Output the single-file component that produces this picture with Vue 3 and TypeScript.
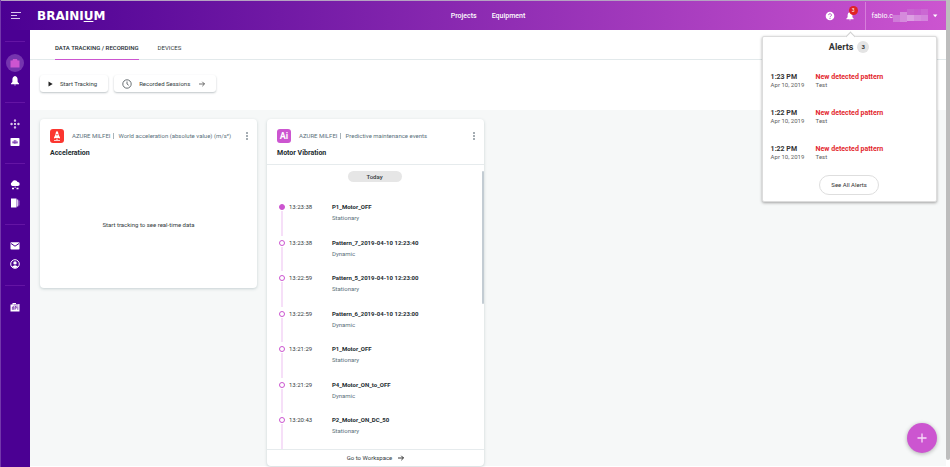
<script setup lang="ts">
interface MotorEvent {
  time: string
  name: string
  kind: string
}
interface Alert {
  time: string
  date: string
  title: string
  source: string
}

const events: MotorEvent[] = [
  { time: '13:23:38', name: 'P1_Motor_OFF', kind: 'Stationary' },
  { time: '13:23:38', name: 'Pattern_7_2019-04-10 12:23:40', kind: 'Dynamic' },
  { time: '13:22:59', name: 'Pattern_5_2019-04-10 12:23:00', kind: 'Stationary' },
  { time: '13:22:59', name: 'Pattern_6_2019-04-10 12:23:00', kind: 'Dynamic' },
  { time: '13:21:29', name: 'P1_Motor_OFF', kind: 'Stationary' },
  { time: '13:21:29', name: 'P4_Motor_ON_to_OFF', kind: 'Dynamic' },
  { time: '13:20:43', name: 'P2_Motor_ON_DC_50', kind: 'Stationary' },
]

const alerts: Alert[] = [
  { time: '1:23 PM', date: 'Apr 10, 2019', title: 'New detected pattern', source: 'Test' },
  { time: '1:22 PM', date: 'Apr 10, 2019', title: 'New detected pattern', source: 'Test' },
  { time: '1:22 PM', date: 'Apr 10, 2019', title: 'New detected pattern', source: 'Test' },
]
</script>

<template>
  <div class="window">
    <div class="app">
      <header class="topbar">
        <button class="menu" aria-label="Menu">
          <svg width="12" height="9" viewBox="0 0 12 9"><path d="M1 1.5h10M1 4.5h6M1 7.5h9" stroke="#d9c4ee" stroke-width="1.2" /></svg>
        </button>
        <a class="logo" href="#">BRAINI<span class="logo-u">U</span>M</a>
        <nav class="main-nav">
          <a href="#">Projects</a>
          <a href="#">Equipment</a>
        </nav>
        <div class="right">
          <div class="tools">
            <button class="tool" aria-label="Help">
              <svg width="10" height="10" viewBox="0 0 10 10"><circle cx="5" cy="5" r="4.3" fill="#fff" /><path d="M3.6 4.1a1.4 1.4 0 1 1 2.1 1.2Q5 5.6 5 6.1" fill="none" stroke="#b348c4" stroke-width=".9" /><circle cx="5" cy="7.3" r=".6" fill="#b348c4" /></svg>
            </button>
            <div class="alert-anchor">
              <button class="tool" aria-label="Alerts">
                <svg width="10" height="10" viewBox="0 0 10 10"><path d="M5 1q2.4.3 2.4 3v2.3l1.2 1.2v.7H1.4v-.7l1.2-1.2V4Q2.6 1.3 5 1zM4 8.700h2Q5 10 4 8.700z" fill="#fff" /></svg>
              </button>
              <span class="badge">3</span>
              <section class="popover">
                <h2>Alerts <span class="count">3</span></h2>
                <ul>
                  <li v-for="(a, i) in alerts" :key="i">
                    <div><strong>{{ a.time }}</strong><span>{{ a.date }}</span></div>
                    <div><strong class="red">{{ a.title }}</strong><span>{{ a.source }}</span></div>
                  </li>
                </ul>
                <button class="see-all">See All Alerts</button>
              </section>
            </div>
          </div>
          <button class="user">
            <span>fabio.c</span>
            <svg class="masked" width="36" height="13" viewBox="0 0 36 13" aria-hidden="true">
              <path d="M0 6h7v7H0z" fill="#cf7bd8" /><path d="M7 3h7v10H7z" fill="#d58adc" /><path d="M14 0h7v6h-7z" fill="#c765d0" /><path d="M14 6h7v6h-7z" fill="#dc9fe2" /><path d="M21 0h7v6h-7z" fill="#c75fd0" /><path d="M21 6h7v6h-7z" fill="#d68ddd" /><path d="M28 0h7v6h-7z" fill="#cb68d3" /><path d="M28 6h7v6h-7z" fill="#d484dc" />
            </svg>
            <svg width="6" height="4" viewBox="0 0 6 4"><path d="M1 .5h4.400L3.200 3.300z" fill="#fff" /></svg>
          </button>
        </div>
      </header>

      <div class="body">
        <aside class="sidebar">
          <div class="group">
            <a class="side active" href="#" aria-label="Projects">
              <svg width="12" height="12" viewBox="0 0 12 12"><path d="M1.500 3.500h2L4 2h4l.5 1.500h2v7h-9z" fill="#cc55d0" /></svg>
            </a>
            <a class="side" href="#" aria-label="Notifications">
              <svg width="12" height="12" viewBox="0 0 12 12"><path d="M6 1q2.600.5 2.600 3.500V7L10 8.600v.6H2v-.6L3.400 7V4.500Q3.400 1.500 6 1zM5 9.800h2Q6 11.300 5 9.800z" fill="#fff" /></svg>
            </a>
          </div>
          <div class="group">
            <a class="side" href="#" aria-label="Motion">
              <svg width="12" height="12" viewBox="0 0 12 12"><g fill="#fff"><circle cx="6" cy="6" r="1" /><path d="M6 1l1.400 1.800H4.600zM6 11l1.400-1.800H4.600zM1 6l1.800-1.400v2.800zM11 6L9.200 4.600v2.800z" /><path d="M5.500 3h1v1h-1zM5.500 8h1v1h-1zM3 5.500h1v1H3zM8 5.500h1v1H8z" /></g></svg>
            </a>
            <a class="side" href="#" aria-label="Models">
              <svg width="12" height="12" viewBox="0 0 12 12"><rect x="1.500" y="2" width="9" height="8" rx=".8" fill="#fff" /><path d="M4 7.500V5.300M5.300 8V4M6.800 8V4M8.100 7.500V5.300M3.500 6.200h5" stroke="#5b0ba0" stroke-width=".7" /></svg>
            </a>
          </div>
          <div class="group">
            <a class="side" href="#" aria-label="Cloud">
              <svg width="12" height="12" viewBox="0 0 12 12"><path d="M3.500 7A2 2 0 0 1 3 3.200 3 3 0 0 1 8.600 3a2 2 0 0 1 .2 4z" fill="#fff" /><path d="M3 8.700h2v1.500H3zM7.500 8.700h2v1.500h-2zM5.700 7.500h.8v1.500h-.8z" fill="#fff" /></svg>
            </a>
            <a class="side" href="#" aria-label="Devices">
              <svg width="12" height="12" viewBox="0 0 12 12"><path d="M2 1.500h5.500v9H2z" fill="#fff" /><path d="M7.500 2.500h1.700v7H7.500z" fill="#d9c4ee" /><path d="M9.200 3.500h1.300v5H9.200z" fill="#9c6bc8" /></svg>
            </a>
          </div>
          <div class="group">
            <a class="side" href="#" aria-label="Mail">
              <svg width="12" height="12" viewBox="0 0 12 12"><rect x="1.500" y="2.200" width="9" height="7.300" rx=".8" fill="#fff" /><path d="M2 3.500l4 2.700 4-2.700" fill="none" stroke="#4b0093" stroke-width="1" /></svg>
            </a>
            <a class="side" href="#" aria-label="Profile">
              <svg width="12" height="12" viewBox="0 0 12 12"><circle cx="6" cy="6" r="4.300" fill="none" stroke="#fff" /><circle cx="6" cy="4.900" r="1.700" fill="#fff" /><path d="M3 8.700Q6 5.700 9 8.700 6 11.300 3 8.700z" fill="#fff" /></svg>
            </a>
          </div>
          <div class="group">
            <a class="side" href="#" aria-label="API">
              <svg width="12" height="12" viewBox="0 0 12 12"><path d="M1.500 3.500h2V2H7v1h3.500v7.500h-9z" fill="#fff" /><path d="M3.400 8.800V6l1.200-.5v3.300M6 8.800V5.500h1.300v1.600H6M8.800 5.300v3.500M4.500 3.900h5" fill="none" stroke="#5b0ba0" stroke-width=".7" /></svg>
            </a>
          </div>
        </aside>

        <main class="main">
          <nav class="tabs">
            <a class="tab current" href="#">DATA TRACKING / RECORDING</a>
            <a class="tab" href="#">DEVICES</a>
          </nav>
          <div class="toolbar">
            <button class="action">
              <svg width="5" height="6" viewBox="0 0 5 6"><path d="M.5.500l4.200 2.500L.5 5.500z" fill="#222" /></svg>
              Start Tracking
            </button>
            <button class="action">
              <svg width="10" height="10" viewBox="0 0 10 10"><circle cx="5" cy="5" r="4.200" fill="none" stroke="#444c52" stroke-width=".8" /><path d="M5 2.500V5l1.700 1.300" fill="none" stroke="#444c52" stroke-width=".8" /></svg>
              Recorded Sessions
              <svg class="arrow" width="6" height="6" viewBox="0 0 6 6"><path d="M0 3h5.500M3.300.8L5.500 3 3.300 5.200" fill="none" stroke="#333" stroke-width=".7" /></svg>
            </button>
          </div>

          <div class="cards">
            <article class="card accel">
              <header class="card-head">
                <div class="meta">
                  <svg width="14" height="14" viewBox="0 0 14 14"><rect width="14" height="14" rx="3" fill="#fb3630" /><path d="M7 1.800q1.600 1.700 1.600 4L10 8.500v1L8.300 9H5.700L4 9.500v-1l1.400-2.700Q5.400 3.500 7 1.800z" fill="#fff" /><circle cx="7" cy="5.800" r=".8" fill="#fb3630" /><path d="M6.500 9.500h1V11h-1zM4 11.300h6v.8H4z" fill="#fff" /></svg>
                  <span class="project">AZURE MILFEI</span>
                  <span class="desc">World acceleration (absolute value) (m/s²)</span>
                  <button class="more" aria-label="More"><svg width="2" height="8" viewBox="0 0 2 8"><path d="M0 0h2v2H0zM0 3h2v2H0zM0 6h2v2H0z" fill="#a5adb3" /></svg></button>
                </div>
                <h3>Acceleration</h3>
              </header>
              <p class="empty">Start tracking to see real-time data</p>
            </article>

            <article class="card motor">
              <header class="card-head ruled">
                <div class="meta">
                  <span class="ai">Ai</span>
                  <span class="project">AZURE MILFEI</span>
                  <span class="desc">Predictive maintenance events</span>
                  <button class="more" aria-label="More"><svg width="2" height="8" viewBox="0 0 2 8"><path d="M0 0h2v2H0zM0 3h2v2H0zM0 6h2v2H0z" fill="#a5adb3" /></svg></button>
                </div>
                <h3>Motor Vibration</h3>
              </header>
              <div class="feed">
                <div class="feed-body">
                  <span class="day">Today</span>
                  <ol>
                    <li v-for="(e, i) in events" :key="i" :class="{ latest: i === 0 }">
                      <span class="rail"><i class="dot"></i></span>
                      <time>{{ e.time }}</time>
                      <div class="event"><strong>{{ e.name }}</strong><span>{{ e.kind }}</span></div>
                    </li>
                  </ol>
                </div>
                <div class="feed-scroll"><i></i></div>
              </div>
              <a class="workspace" href="#">
                Go to Workspace
                <svg width="6" height="6" viewBox="0 0 6 6"><path d="M0 3h5.500M3.300.8L5.500 3 3.300 5.200" fill="none" stroke="#222" stroke-width=".9" /></svg>
              </a>
            </article>
          </div>
        </main>
      </div>
    </div>
    <div class="page-scroll"><i></i></div>
    <button class="fab" aria-label="Add">
      <svg width="10" height="10" viewBox="0 0 10 10"><path d="M5 .5v9M.5 5h9" stroke="#f6dcf7" stroke-width="1.300" /></svg>
    </button>
  </div>
</template>

<style>
body {
  margin: 0;
  background: #fff;
}
</style>

<style scoped>
* {
  box-sizing: border-box;
}
.window {
  display: flex;
  min-height: 100vh;
  font-family: Roboto, "Liberation Sans", sans-serif;
  font-size: 6px;
  line-height: 8px;
  color: #333b40;
}
button {
  font: inherit;
  color: inherit;
  border: 0;
  padding: 0;
  background: none;
  display: flex;
  align-items: center;
}
a {
  color: inherit;
  text-decoration: none;
}
svg {
  display: block;
  flex: none;
}
h2, h3, p, ul, ol {
  margin: 0;
  padding: 0;
  list-style: none;
}
.app {
  flex: 1;
  display: flex;
  flex-direction: column;
  border-left: 1px solid #7337ab;
}
.page-scroll {
  width: 4px;
  padding-bottom: 7px;
  display: flex;
}
.page-scroll i {
  flex: 1;
  background: #bdbdbd;
  border-radius: 0 0 2px 2px;
}
.topbar {
  display: grid;
  grid-template-columns: 29px 1fr auto 1fr;
  align-items: center;
  height: 30px;
  border-top: 1px solid #b5a3c2;
  background: linear-gradient(90deg, #4b0093, #cc55d0);
  color: #fff;
  font-size: 7px;
}
.menu {
  justify-content: center;
}
.logo {
  margin-left: 7px;
  font: bold 12px/14px "DejaVu Sans", sans-serif;
}
.logo-u {
  text-decoration: underline;
  text-decoration-thickness: 1px;
  text-underline-offset: 1px;
}
.main-nav {
  display: flex;
  gap: 15px;
  font-weight: 500;
}
.right {
  display: flex;
  align-items: center;
  justify-content: flex-end;
}
.tools {
  display: flex;
  gap: 10px;
}
.alert-anchor {
  position: relative;
}
.badge {
  position: absolute;
  left: 4px;
  top: -5px;
  width: 9px;
  height: 9px;
  border-radius: 50%;
  background: #e02424;
  font-size: 5px;
  line-height: 9px;
  text-align: center;
}
.user {
  height: 28px;
  margin-left: 10px;
  padding: 0 8px 0 6px;
  border-left: 1px solid #d77ddb;
}
.masked {
  margin-right: 3px;
}
.popover {
  position: absolute;
  z-index: 2;
  top: 25px;
  right: -82px;
  width: 175px;
  padding: 4px 8px 6px;
  background: #fff;
  border: 1px solid #dcdcdc;
  border-radius: 2px;
  box-shadow: 0 1px 3px rgba(0, 0, 0, 0.35);
  color: #5d5d5d;
}
.popover::before {
  content: "";
  position: absolute;
  top: -4px;
  left: 84px;
  width: 6px;
  height: 6px;
  background: #fff;
  border: solid #d0d0d0;
  border-width: 1px 0 0 1px;
  transform: rotate(45deg);
}
.popover h2 {
  display: flex;
  justify-content: center;
  align-items: center;
  gap: 4px;
  height: 12px;
  font-size: 9px;
  color: #333;
}
.count {
  width: 12px;
  height: 12px;
  border-radius: 50%;
  background: #e4e4e4;
  font-size: 6px;
  line-height: 12px;
  text-align: center;
}
.popover ul {
  padding-top: 20px;
}
.popover li {
  display: grid;
  grid-template-columns: 45px 1fr;
  height: 36px;
}
.popover li div {
  display: flex;
  flex-direction: column;
}
.popover li span {
  font-size: 6px;
}
.popover strong {
  color: #333;
}
.popover .red {
  color: #e3262c;
}
.see-all {
  height: 20px;
  margin: -6px auto 0;
  padding: 0 11px;
  border: 1px solid #dedede;
  border-radius: 10px;
  font-size: 6px;
  color: #333;
}
.body {
  flex: 1;
  display: flex;
}
.sidebar {
  width: 29px;
  padding: 11px 5px 0 4px;
  background: #4b0093;
}
.group {
  padding: 12px 0;
  border-top: 1px solid #6414a4;
}
.side {
  display: flex;
  align-items: center;
  justify-content: center;
  width: 18px;
  height: 18px;
  margin: 0 auto;
  border-radius: 50%;
}
.side.active {
  background: #7534ae;
}
.main {
  flex: 1;
  display: flex;
  flex-direction: column;
  background: #f6f8f8;
  border-bottom: 1px solid #fff;
}
.tabs {
  display: flex;
  gap: 19px;
  height: 30px;
  padding-left: 25px;
  background: #fff;
  border-bottom: 1px solid #e2e9eb;
}
.tab {
  height: 30px;
  line-height: 36px;
}
.tab.current {
  font-weight: 500;
  color: #222b30;
  border-bottom: 1px solid #cc55d0;
}
.toolbar {
  display: flex;
  gap: 6px;
  padding: 15px 10px 18px;
  background: #fff;
}
.action {
  gap: 7px;
  height: 17px;
  padding: 0 11px 0 8px;
  border-radius: 3px;
  box-shadow: 0 1px 2px rgba(40, 60, 70, 0.3);
}
.arrow {
  margin-left: 2px;
}
.cards {
  flex: 1;
  display: grid;
  grid-template-columns: repeat(auto-fill, 217px);
  align-items: start;
  gap: 10px;
  padding: 9px 10px 0;
}
.card {
  display: flex;
  flex-direction: column;
  background: #fff;
  border-radius: 4px;
  box-shadow: 0 1px 3px rgba(60, 90, 100, 0.25);
}
.accel {
  height: 169px;
}
.motor {
  height: 100%;
}
.card-head {
  height: 46px;
  padding: 10px 9px 0 10px;
}
.ruled {
  border-bottom: 1px solid #e6ebed;
}
.meta {
  display: flex;
  align-items: center;
  height: 14px;
  color: #5a717b;
}
.project {
  margin-left: 8px;
  padding-right: 3px;
  border-right: 1px solid #a9b4ba;
  line-height: 6px;
}
.desc {
  margin-left: 4px;
}
.more {
  margin-left: auto;
}
.ai {
  width: 14px;
  height: 14px;
  border-radius: 3px;
  background: #cc55d0;
  color: #fff;
  font-size: 9px;
  font-weight: bold;
  line-height: 14px;
  text-align: center;
}
.card h3 {
  margin-top: 6px;
  font-size: 7px;
  color: #222b30;
}
.empty {
  flex: 1;
  padding-top: 56px;
  text-align: center;
}
.feed {
  flex: 1;
  display: flex;
  min-height: 0;
}
.feed-body {
  flex: 1;
  display: flex;
  flex-direction: column;
  padding-top: 6px;
}
.day {
  align-self: center;
  width: 54px;
  margin-bottom: 18px;
  border-radius: 6px;
  background: #e6e6e6;
  line-height: 11px;
  text-align: center;
  font-weight: 500;
}
.feed ol {
  flex: 1;
  display: flex;
  flex-direction: column;
}
.feed li {
  flex: 1;
  display: grid;
  grid-template-columns: 8px 42px 1fr;
  padding-left: 11px;
}
.rail {
  display: flex;
  flex-direction: column;
  align-items: center;
  padding-top: 4px;
  gap: 1px;
}
.rail::after {
  content: "";
  flex: 1;
  width: 2px;
  background: #f6dff8;
}
.dot {
  width: 6px;
  height: 6px;
  border: 1px solid #cc55d0;
  border-radius: 50%;
}
.latest .dot {
  background: #cc55d0;
}
.feed time {
  padding: 3px 0 0 3px;
}
.event {
  display: flex;
  flex-direction: column;
  gap: 3px;
  padding: 3px 0 0 4px;
  color: #5a717b;
}
.event strong {
  color: #222b30;
}
.feed-scroll {
  width: 2px;
  padding-top: 6px;
}
.feed-scroll i {
  display: block;
  height: 48%;
  border-radius: 1px;
  background: #c3ccd3;
}
.workspace {
  display: flex;
  align-items: center;
  justify-content: center;
  gap: 6px;
  height: 17px;
  border-top: 1px solid #e6ebed;
}
.fab {
  position: fixed;
  right: 13px;
  bottom: 14px;
  width: 30px;
  height: 30px;
  justify-content: center;
  border-radius: 50%;
  background: #cc55d0;
  box-shadow: 0 1px 4px rgba(0, 0, 0, 0.3);
}
</style>
